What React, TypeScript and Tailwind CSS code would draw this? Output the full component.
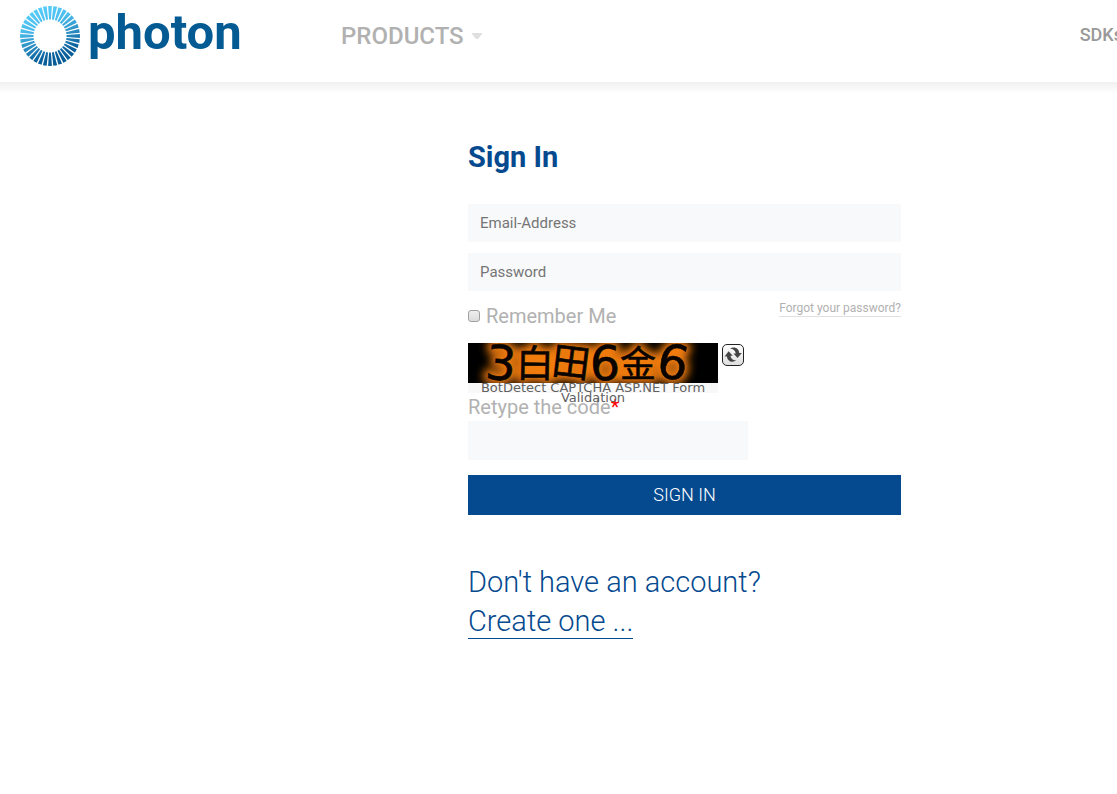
import { useState } from 'react'

const RAYS = Array.from({ length: 36 }, (_, i) => i * 10)

const CAPTCHA_CHARS = [
  { char: '3', x: 33, y: 37, size: 48, rotate: 5 },
  { char: '白', x: 67, y: 34, size: 38, rotate: 1 },
  { char: '田', x: 103, y: 33, size: 38, rotate: 7 },
  { char: '6', x: 137, y: 37, size: 48, rotate: 2 },
  { char: '金', x: 170, y: 34, size: 36, rotate: 0 },
  { char: '6', x: 205, y: 36, size: 48, rotate: 12 },
]

function Logo() {
  return (
    <a href="#" className="flex w-[223px] shrink-0 items-start gap-2 text-[#045a93]">
      <svg viewBox="0 0 60 60" className="size-[60px] shrink-0" aria-hidden="true">
        <defs>
          <linearGradient id="ring" x1="18" y1="0" x2="40" y2="60" gradientUnits="userSpaceOnUse">
            <stop offset="0" stopColor="#58d0fc" />
            <stop offset="0.3" stopColor="#4bbcec" />
            <stop offset="0.8" stopColor="#0a619c" />
            <stop offset="1" stopColor="#045a93" />
          </linearGradient>
          <mask id="rays">
            {RAYS.map((deg) => (
              <path key={deg} d="M28 -1 H32 L30.9 13.5 H29.1 Z" fill="white" transform={`rotate(${deg} 30 30)`} />
            ))}
          </mask>
        </defs>
        <circle cx="30" cy="30" r="30" fill="url(#ring)" mask="url(#rays)" />
      </svg>
      <span className="text-[49px] leading-[53px] font-bold">photon</span>
    </a>
  )
}

function CaptchaText({ halo = false }: { halo?: boolean }) {
  return (
    <g
      fill={halo ? '#f07c08' : '#0a0400'}
      stroke={halo ? '#f07c08' : '#0a0400'}
      strokeWidth={halo ? 9 : 0.6}
      strokeLinejoin="round"
      textAnchor="middle"
      filter={halo ? 'url(#glow)' : undefined}
      aria-hidden={halo}
    >
      {CAPTCHA_CHARS.map((c) => (
        <text key={c.x} x={c.x} y={c.y} fontSize={c.size} transform={`rotate(${c.rotate} ${c.x} 20)`}>
          {c.char}
        </text>
      ))}
    </g>
  )
}

function CaptchaImage() {
  return (
    <svg
      viewBox="0 0 250 40"
      role="img"
      aria-label="CAPTCHA"
      className="block h-10 w-[250px] bg-black font-['DejaVu_Sans','Noto_Sans_CJK_SC',sans-serif]"
    >
      <defs>
        <filter id="glow" x="-10%" y="-30%" width="120%" height="160%">
          <feGaussianBlur stdDeviation="4" />
        </filter>
      </defs>
      <CaptchaText halo />
      <CaptchaText />
    </svg>
  )
}

function ReloadIcon() {
  return (
    <svg viewBox="0 0 22 22" className="size-[22px]" aria-hidden="true">
      <defs>
        <linearGradient id="reload" x1="0" y1="0" x2="0" y2="1">
          <stop offset="0" stopColor="#ffffff" />
          <stop offset="1" stopColor="#dedede" />
        </linearGradient>
      </defs>
      <rect x="0.5" y="0.5" width="21" height="21" rx="4.5" fill="url(#reload)" stroke="#222" />
      <g fill="#444">
        <path d="M8 4.4 C12.6 2 17 4.4 17.2 9 H19.8 L15.6 14 L11.4 9.4 H13.8 C13.4 6.4 11.2 4.6 8 4.4 Z" />
        <path d="M14.4 16.6 C9.8 19.2 5.2 16.8 5 12.4 H2.6 L6.6 7.2 L10.8 11.8 H8.4 C8.8 14.8 11 16.6 14.4 16.6 Z" />
      </g>
    </svg>
  )
}

export default function App() {
  const [remember, setRemember] = useState(false)

  return (
    <div className="min-h-screen overflow-hidden bg-white font-[Roboto,sans-serif]">
      <header className="flex h-[82px] items-start overflow-hidden bg-white pt-[6px] pl-5">
        <Logo />
        <nav className="ml-[98px] flex flex-1 items-start justify-between pt-3 whitespace-nowrap">
          <button type="button" className="flex items-center gap-2 text-2xl leading-9 font-medium text-[#b1b1b1]">
            PRODUCTS
            <svg viewBox="0 0 10 6" className="h-[6px] w-[10px]" aria-hidden="true">
              <path d="M0 0 H10 V1 L6 6 H4 L0 1 Z" fill="#dfdfdf" />
            </svg>
          </button>
          <a href="#" className="-mr-[6px] text-lg leading-[34px] font-medium text-[#999]">
            SDKs
          </a>
        </nav>
      </header>
      <div className="h-3 bg-linear-to-b from-[#f0f0f0] to-white" />

      <main className="grid grid-cols-[468fr_433fr_216fr]">
        <section className="col-start-2 pt-[43px]">
          <h1 className="text-[29px] leading-10 font-bold text-[#054a8f]">Sign In</h1>

          <form className="pt-[27px]" onSubmit={(e) => e.preventDefault()}>
            <input
              type="email"
              aria-label="Email-Address"
              placeholder="Email-Address"
              className="block h-[38px] w-full bg-[#f8f9fb] px-3 text-[15px] text-gray-700 outline-none placeholder:text-[#757575]"
            />
            <input
              type="password"
              aria-label="Password"
              placeholder="Password"
              className="mt-[11px] block h-[38px] w-full bg-[#f8f9fb] px-3 text-[15px] text-gray-700 outline-none placeholder:text-[#757575]"
            />

            <div className="flex items-start justify-between pt-[9px]">
              <label className="flex items-center gap-[6px] pt-[1px] text-xl leading-[30px] text-[#b1b1b1]">
                <input
                  type="checkbox"
                  checked={remember}
                  onChange={(e) => setRemember(e.target.checked)}
                  className="size-3 appearance-none rounded-[3px] border border-[#a0a0a0] bg-linear-to-b from-[#eee] to-[#dcdcdc] checked:bg-[#054a8f]"
                />
                Remember Me
              </label>
              <a href="#" className="border-b border-[#e0e0e0] text-xs leading-4 text-[#b1b1b1]">
                Forgot your password?
              </a>
            </div>

            <div className="flex items-start gap-1 pt-3">
              <div className="h-[50px] w-[250px] bg-[#f8f8f8]">
                <CaptchaImage />
                <a
                  href="#"
                  className="relative z-10 block text-center font-['DejaVu_Sans',sans-serif] text-[13px] leading-[10px] text-[#606060]"
                >
                  BotDetect CAPTCHA ASP.NET Form Validation
                </a>
              </div>
              <button type="button" aria-label="Change the CAPTCHA code" className="pt-px">
                <ReloadIcon />
              </button>
            </div>

            <label htmlFor="code" className="block text-xl leading-7 text-[#b1b1b1]">
              Retype the code<span className="text-[#f00]">*</span>
            </label>
            <input id="code" type="text" className="block h-[39px] w-[280px] bg-[#f8f9fb] px-3 text-[15px] outline-none" />

            <button type="submit" className="mt-[15px] h-10 w-full bg-[#054a8f] text-lg font-light text-white">
              SIGN IN
            </button>
          </form>

          <div className="pt-12 text-[29px] leading-[39px] font-light text-[#054a8f]">
            <p>Don't have an account?</p>
            <a href="#" className="mt-px inline-block border-b border-[#054a8f] leading-[34px]">
              Create one ...
            </a>
          </div>
        </section>
      </main>
    </div>
  )
}
